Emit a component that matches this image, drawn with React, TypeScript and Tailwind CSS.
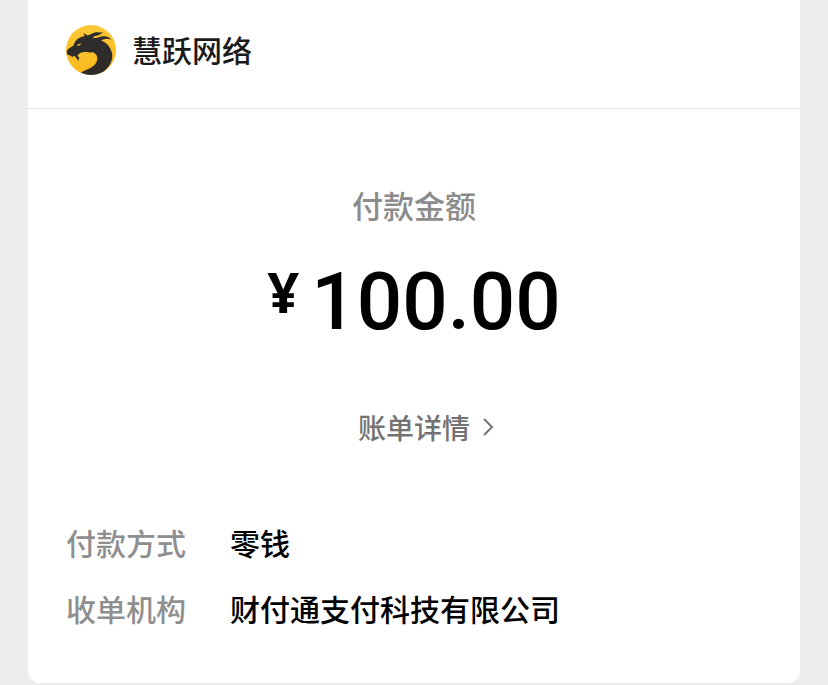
import React from 'react';

const details = [
  { label: '付款方式', value: '零钱' },
  { label: '收单机构', value: '财付通支付科技有限公司' },
];

function DragonLogo() {
  return (
    <svg viewBox="0 0 150 150" className="size-[50px] shrink-0" aria-hidden="true">
      <defs>
        <linearGradient id="sun" x1="0" y1="0" x2="0" y2="1">
          <stop offset="0" stopColor="#fbc936" />
          <stop offset="1" stopColor="#fbb81f" />
        </linearGradient>
        <clipPath id="disc">
          <circle cx="75" cy="75" r="75" />
        </clipPath>
      </defs>
      <circle cx="75" cy="75" r="75" fill="url(#sun)" />
      <g clipPath="url(#disc)" fill="#2f2d2c">
        <path d="M2 78 L10 69 L22 62 L27 50 L34 42 L47 35 L56 34 L52 25 L64 31 C72 31 76 25 84 23 C94 20 103 25 111 20 C106 30 96 30 87 33 L80 38 C92 42 98 36 109 34 C121 32 131 36 136 44 C125 38 115 42 105 46 C121 53 132 64 137 80 C142 98 136 114 126 127 L104 150 L40 150 C45 139 60 136 73 129 C85 123 93 114 94 103 C95 94 90 86 81 82 C74 83 65 82 58 80 L42 84 L34 92 L40 98 L37 107 L30 98 L26 92 L19 96 L11 91 L4 89 Z" />
        <path fill="#fbc12e" d="M34 59 L46 55 L42 61 L34 63 Z" />
      </g>
    </svg>
  );
}

export default function App() {
  return (
    <div className="bg-[#ececec] px-7 pb-0.5 font-['Noto_Sans_CJK_SC',sans-serif] font-medium">
      <main className="rounded-b-xl bg-white">
        <header className="flex h-[109px] items-start gap-4 border-b border-[#e5e5e5] px-[38px] pt-[25px]">
          <DragonLogo />
          <h1 className="text-[30px] leading-12 text-[#1a1a1a]">慧跃网络</h1>
        </header>

        <section className="flex flex-col items-center pt-[76px]">
          <h2 className="text-[31px] leading-10 text-[#8c8c8c]">付款金额</h2>
          <p className="mt-5 flex items-start gap-3 leading-[114px] text-black">
            <span className="font-['Open_Sans',sans-serif] text-[56px] font-bold leading-[92px]">¥</span>
            <span className="font-['Roboto',sans-serif] text-[80px] font-medium">100.00</span>
          </p>
          <button type="button" className="mt-12 ml-6 flex items-center gap-3 text-[28px] leading-10 text-[#737373]">
            账单详情
            <svg viewBox="0 0 12 20" className="h-5 w-3" fill="none" stroke="currentColor" strokeWidth="2" aria-hidden="true">
              <path d="M2 2l8 8-8 8" />
            </svg>
          </button>
        </section>

        <dl className="flex flex-col gap-[26px] px-[38px] pt-[75px] pb-[55px] text-[30px] leading-10">
          {details.map((item) => (
            <div key={item.label} className="flex gap-11">
              <dt className="shrink-0 text-[#8f8f8f]">{item.label}</dt>
              <dd className="text-black">{item.value}</dd>
            </div>
          ))}
        </dl>
      </main>
    </div>
  );
}
